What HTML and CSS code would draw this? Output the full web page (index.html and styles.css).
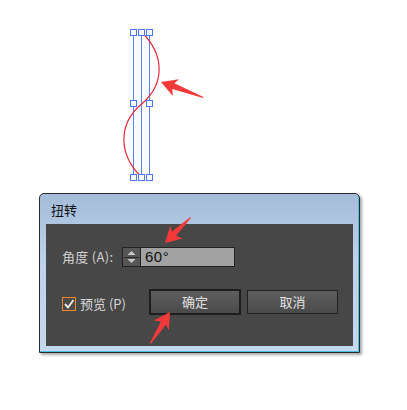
FILE: index.html
```html
<!DOCTYPE html>
<html>
<head>
<meta charset="utf-8">
<link rel="stylesheet" href="styles.css">
</head>
<body>
<div class="page">
  <svg class="drawing" width="407" height="193" viewBox="0 0 407 193">
    <g stroke="#5b7ff0" stroke-width="1" fill="none">
      <line x1="133.5" y1="32" x2="133.5" y2="177"/>
      <line x1="141.5" y1="32" x2="141.5" y2="177"/>
      <line x1="149.5" y1="32" x2="149.5" y2="177"/>
    </g>
    <path d="M141.5,32 C165,55 165,84 141.5,104 C118,124 118,154 141.5,177" stroke="#e8273a" stroke-width="1.2" fill="none"/>
    <g stroke="#4a78f0" stroke-width="1" fill="#fff">
      <rect x="130.5" y="29.5" width="6" height="6"/>
      <rect x="138.5" y="29.5" width="6" height="6"/>
      <rect x="146.5" y="29.5" width="6" height="6"/>
      <rect x="130.5" y="100.5" width="6" height="6"/>
      <rect x="146.5" y="100.5" width="6" height="6"/>
      <rect x="130.5" y="174.5" width="6" height="6"/>
      <rect x="138.5" y="174.5" width="6" height="6"/>
      <rect x="146.5" y="174.5" width="6" height="6"/>
    </g>
  </svg>
  <div class="dialog">
    <div class="title">扭转</div>
    <div class="panel">
      <div class="row">
        <span class="label">角度 (A):</span>
        <span class="spinner">
          <svg width="17" height="18" viewBox="0 0 17 18">
            <polygon points="8.5,3 12.5,7 4.5,7" fill="#c8c8c8"/>
            <line x1="1" y1="9.5" x2="16" y2="9.5" stroke="#2a2a2a"/>
            <polygon points="4.5,11 12.5,11 8.5,15" fill="#c8c8c8"/>
          </svg>
        </span>
        <span class="field">60°</span>
      </div>
      <div class="row row2">
        <span class="check">
          <span class="box">
            <svg width="12" height="12" viewBox="0 0 12 12"><path d="M2,6 L5,9.5 L10.5,2" stroke="#e6e6e6" stroke-width="2" fill="none"/></svg>
          </span>
          <span class="clabel">预览 (P)</span>
        </span>
        <span class="btn btn-ok">确定</span>
        <span class="btn btn-cancel">取消</span>
      </div>
    </div>
  </div>
  <svg class="arrows" width="407" height="410" viewBox="0 0 407 410">
    <g fill="#f23a3a">
      <polygon transform="translate(161,82) rotate(-159.15)" points="0,0 -16,-9 -13,-2.5 -45,0 -45,1.2 -13,3.5 -16,9"/>
      <polygon transform="translate(165,243) rotate(136.1)" points="0,0 -16,-9 -13,-2.5 -36,0 -36,1.2 -13,3.5 -16,9"/>
      <polygon transform="translate(170,312) rotate(-57.2)" points="0,0 -16,-9 -13,-2.5 -37,0 -37,1.2 -13,3.5 -16,9"/>
    </g>
  </svg>
</div>
</body>
</html>
```
FILE: styles.css
```css
html, body {
  margin: 0;
  padding: 0;
  background: #fff;
}
.page {
  position: relative;
  width: 407px;
  height: 410px;
  font-family: "Noto Sans CJK SC", "Noto Sans", sans-serif;
}
.drawing {
  display: block;
}
.dialog {
  margin-left: 39px;
  width: 319px;
  height: 158px;
  border: 1px solid #2a2a2a;
  border-radius: 5px 5px 0 0;
  background: linear-gradient(#a4bcd9, #bcd2ea 40%, #c4d9ee);
  box-shadow: 2px 2px 3px rgba(0,0,0,0.35), inset -1px -1px 0 #4cc0e6;
  display: flex;
  flex-direction: column;
}
.title {
  height: 30px;
  box-sizing: border-box;
  padding: 9px 0 0 11px;
  font-size: 13px;
  line-height: 14px;
  color: #111;
}
.panel {
  margin: 0 6px 0 6px;
  height: 122px;
  background: #474747;
  box-sizing: border-box;
  padding: 23px 0 0 16px;
}
.row {
  display: flex;
  align-items: center;
  height: 19px;
}
.label {
  width: 60px;
  font-size: 13px;
  color: #d2d2d2;
  white-space: nowrap;
  letter-spacing: 0.3px;
}
.spinner {
  width: 17px;
  height: 18px;
  border: 1px solid #222;
  background: #565656;
  display: flex;
}
.field {
  width: 89px;
  height: 18px;
  box-sizing: content-box;
  border: 1px solid #222;
  border-left: none;
  background: #a2a2a2;
  color: #111;
  font-family: "Liberation Sans", "Noto Sans", sans-serif;
  font-size: 15px;
  line-height: 18px;
  padding-left: 4px;
  letter-spacing: 0.5px;
}
.row2 {
  margin-top: 23px;
  height: 25px;
}
.check {
  width: 87px;
  display: flex;
  align-items: center;
  margin-top: 4px;
}
.box {
  width: 12px;
  height: 12px;
  border: 1px solid #e8892a;
  background: #4a4a4a;
  display: flex;
}
.clabel {
  margin-left: 4px;
  font-size: 13px;
  color: #d8d8d8;
  white-space: nowrap;
}
.btn {
  display: flex;
  align-items: center;
  justify-content: center;
  box-sizing: border-box;
  background: linear-gradient(#5e5e5e, #4a4a4a);
  color: #e2e2e2;
  font-size: 13px;
}
.btn-ok {
  width: 92px;
  height: 26px;
  border: 2px solid #1e1e1e;
}
.btn-cancel {
  margin-left: 6px;
  width: 91px;
  height: 24px;
  border: 1px solid #222;
}
.arrows {
  position: absolute;
  left: 0;
  top: 0;
  pointer-events: none;
}
```
